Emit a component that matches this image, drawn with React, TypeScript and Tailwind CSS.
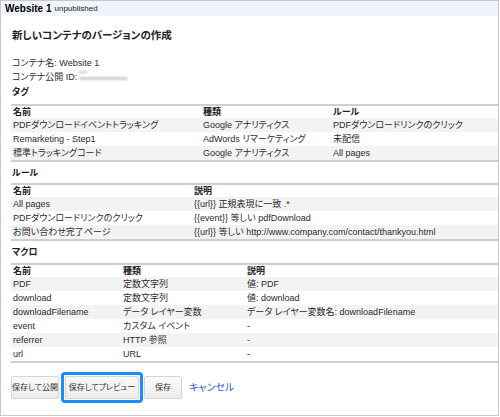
import React from 'react';

const font = "font-['Liberation_Sans','Noto_Sans_CJK_JP',sans-serif] [font-feature-settings:'palt']";

type Row = string[];

const tagRows: Row[] = [
    ['PDFダウンロードイベントトラッキング', 'Google アナリティクス', 'PDFダウンロードリンクのクリック'],
    ['Remarketing - Step1', 'AdWords リマーケティング', '未配信'],
    ['標準トラッキングコード', 'Google アナリティクス', 'All pages'],
];

const ruleRows: Row[] = [
    ['All pages', '{{url}} 正規表現に一致 .*'],
    ['PDFダウンロードリンクのクリック', '{{event}} 等しい pdfDownload'],
    ['お問い合わせ完了ページ', '{{url}} 等しい http://www.company.com/contact/thankyou.html'],
];

const macroRows: Row[] = [
    ['PDF', '定数文字列', '値: PDF'],
    ['download', '定数文字列', '値: download'],
    ['downloadFilename', 'データ レイヤー変数', 'データ レイヤー変数名: downloadFilename'],
    ['event', 'カスタム イベント', '-'],
    ['referrer', 'HTTP 参照', '-'],
    ['url', 'URL', '-'],
];

const Table: React.FC<{ cols: string; head: string[]; rows: Row[] }> = ({ cols, head, rows }) => (
    <div className="border-t-2 border-b-2 border-[#cfcfcf]">
        <div className={`grid ${cols} h-[12px] items-center font-bold text-[#222]`}>
            {head.map(h => <div key={h} className="pl-[2px]">{h}</div>)}
        </div>
        {rows.map((r, i) => (
            <div key={i} className={`grid ${cols} h-[14px] items-center ${i % 2 === 0 ? 'bg-[#f3f3f3]' : 'bg-white'}`}>
                {r.map((c, j) => <div key={j} className="pl-[2px] whitespace-nowrap">{c}</div>)}
            </div>
        ))}
    </div>
);

const Btn: React.FC<{ label: string; w: string }> = ({ label, w }) => (
    <button className={`${w} h-[23px] rounded-[2px] border border-[#d6d6d6] bg-gradient-to-b from-[#fafafa] to-[#ececec] text-[8px] text-[#333] flex items-center justify-center`}>
        {label}
    </button>
);

export default function App() {
    return (
        <div className={`w-[500px] h-[417px] bg-white text-[#2b2b2b] text-[9px] leading-none ${font}`}>
            <div className="w-[499px] h-[416px] border border-[#c9c9c9] flex flex-col">
                <header className="h-[15px] bg-[#f1f4fc] flex items-center pl-[4px] gap-[3px]">
                    <span className="text-[10px] font-bold text-black">Website 1</span>
                    <span className="text-[8px] text-[#222]">unpublished</span>
                </header>

                <main className="pl-[10px] flex flex-col">
                    <h1 className="mt-[12px] h-[14px] flex items-center pl-[1px] text-[10.5px] font-bold text-[#222]">新しいコンテナのバージョンの作成</h1>

                    <div className="mt-[14px] h-[14px] flex items-center pl-[1px]">コンテナ名: Website 1</div>
                    <div className="h-[14px] flex items-center pl-[1px]">
                        <span>コンテナ公開 ID:</span>
                        <span className="relative ml-[1px] w-[50px] h-[14px]">
                            <span className="absolute left-[1px] top-[1px] w-[8px] h-[2px] bg-[#c8c8c8] blur-[0.8px]" />
                            <span className="absolute left-[1px] top-[7px] w-[48px] h-[3px] bg-[#cfcfcf] blur-[1px]" />
                        </span>
                    </div>

                    <h2 className="mt-[1px] h-[14px] flex items-center pl-[1px] font-bold text-[#222]">タグ</h2>
                    <div className="mt-[5px]">
                        <Table cols="grid-cols-[190px_130px_1fr]" head={['名前', '種類', 'ルール']} rows={tagRows} />
                    </div>

                    <h2 className="mt-[4px] h-[14px] flex items-center pl-[1px] font-bold text-[#222]">ルール</h2>
                    <div className="mt-[3px]">
                        <Table cols="grid-cols-[181px_1fr]" head={['名前', '説明']} rows={ruleRows} />
                    </div>

                    <h2 className="mt-[4px] h-[14px] flex items-center pl-[1px] font-bold text-[#222]">マクロ</h2>
                    <div className="mt-[4px]">
                        <Table cols="grid-cols-[110px_124px_1fr]" head={['名前', '種類', '説明']} rows={macroRows} />
                    </div>

                    <div className="mt-[9px] flex items-center">
                        <Btn label="保存して公開" w="w-[48px]" />
                        <div className="ml-[2px] rounded-[4px] border-[3px] border-[#1a8cff] p-[1px]">
                            <Btn label="保存してプレビュー" w="w-[74px]" />
                        </div>
                        <div className="ml-[1px]">
                            <Btn label="保存" w="w-[38px]" />
                        </div>
                        <a className="ml-[7px] text-[10px] text-[#1f5fbf]">キャンセル</a>
                    </div>
                </main>
            </div>
        </div>
    );
}
